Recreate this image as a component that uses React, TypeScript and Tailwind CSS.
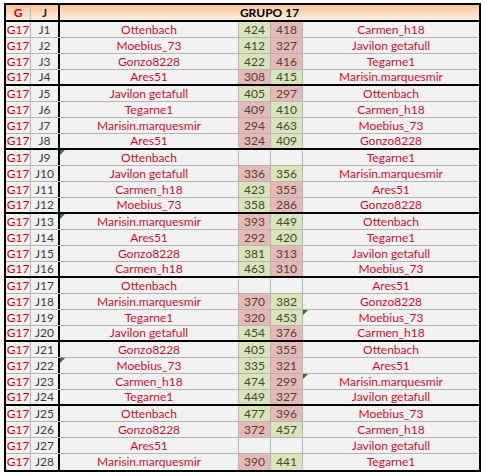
import React from "react";

type Row = [string, string, number | null, number | null, string, number?];

const rows: Row[] = [
  ["J1", "Ottenbach", 424, 418, "Carmen_h18"],
  ["J2", "Moebius_73", 412, 327, "Javilon getafull"],
  ["J3", "Gonzo8228", 422, 416, "Tegarne1"],
  ["J4", "Ares51", 308, 415, "Marisin.marquesmir"],
  ["J5", "Javilon getafull", 405, 297, "Ottenbach"],
  ["J6", "Tegarne1", 409, 410, "Carmen_h18"],
  ["J7", "Marisin.marquesmir", 294, 463, "Moebius_73"],
  ["J8", "Ares51", 324, 409, "Gonzo8228"],
  ["J9", "Ottenbach", null, null, "Tegarne1", 1],
  ["J10", "Javilon getafull", 336, 356, "Marisin.marquesmir"],
  ["J11", "Carmen_h18", 423, 355, "Ares51"],
  ["J12", "Moebius_73", 358, 286, "Gonzo8228"],
  ["J13", "Marisin.marquesmir", 393, 449, "Ottenbach", 1],
  ["J14", "Ares51", 292, 420, "Tegarne1"],
  ["J15", "Gonzo8228", 381, 313, "Javilon getafull"],
  ["J16", "Carmen_h18", 463, 310, "Moebius_73"],
  ["J17", "Ottenbach", null, null, "Ares51"],
  ["J18", "Marisin.marquesmir", 370, 382, "Gonzo8228"],
  ["J19", "Tegarne1", 320, 453, "Moebius_73", 2],
  ["J20", "Javilon getafull", 454, 376, "Carmen_h18"],
  ["J21", "Gonzo8228", 405, 355, "Ottenbach"],
  ["J22", "Moebius_73", 335, 321, "Ares51", 1],
  ["J23", "Carmen_h18", 474, 299, "Marisin.marquesmir", 2],
  ["J24", "Tegarne1", 449, 327, "Javilon getafull"],
  ["J25", "Ottenbach", 477, 396, "Moebius_73"],
  ["J26", "Gonzo8228", 372, 457, "Carmen_h18"],
  ["J27", "Ares51", null, null, "Javilon getafull"],
  ["J28", "Marisin.marquesmir", 390, 441, "Tegarne1"],
];

function Tri() {
  return (
    <span className="absolute left-0 top-0 h-0 w-0 border-t-[5px] border-r-[5px] border-t-[#1f7a1f] border-r-transparent" />
  );
}

function Score({ v, other }: { v: number | null; other: number | null }) {
  let bg = "bg-[#f2f2f2]";
  if (v !== null && other !== null) bg = v > other ? "bg-[#d8e4bc]" : "bg-[#e6b8b7]";
  return (
    <div className={`flex w-[32px] shrink-0 items-center justify-center border-r border-[#b4b4b4] text-[#4a4530] ${bg}`}>
      {v ?? ""}
    </div>
  );
}

export default function App() {
  return (
    <div className="h-[475px] w-[485px] bg-white pl-[4px] pt-[3px] font-['Lato',sans-serif] text-[12px] leading-none">
      <div className="w-[477px] border-2 border-black bg-[#f2f2f2]">
        <div className="flex h-[17px] border-b-2 border-black bg-gradient-to-b from-[#fac59a] to-[#fdefe4] font-bold">
          <div className="flex w-[25px] shrink-0 items-center justify-center border-r border-[#b4b4b4] text-[#d00000]">G</div>
          <div className="flex w-[29px] shrink-0 items-center justify-center border-r-2 border-black text-[#222]">J</div>
          <div className="flex flex-1 items-center justify-center text-black">GRUPO 17</div>
        </div>
        {rows.map((r, i) => {
          const [j, a, s1, s2, b, tri] = r;
          const last = i === rows.length - 1;
          const groupEnd = (i + 1) % 4 === 0;
          return (
            <div
              key={j}
              className={`flex h-[16px] ${last ? "" : groupEnd ? "border-b-2 border-black" : "border-b border-[#b4b4b4]"}`}
            >
              <div className="flex w-[25px] shrink-0 items-center justify-center border-r border-[#b4b4b4] text-[#d00000]">G17</div>
              <div className="flex w-[29px] shrink-0 items-center justify-center border-r-2 border-black text-[#3c3c3c]">{j}</div>
              <div className="relative flex w-[179px] shrink-0 items-center justify-center border-r border-[#b4b4b4] text-[#c8102e]">
                {tri === 1 && <Tri />}
                {a}
              </div>
              <Score v={s1} other={s2} />
              <Score v={s2} other={s1} />
              <div className="relative flex flex-1 items-center justify-center text-[#c8102e]">
                {tri === 2 && <Tri />}
                {b}
              </div>
            </div>
          );
        })}
      </div>
    </div>
  );
}
